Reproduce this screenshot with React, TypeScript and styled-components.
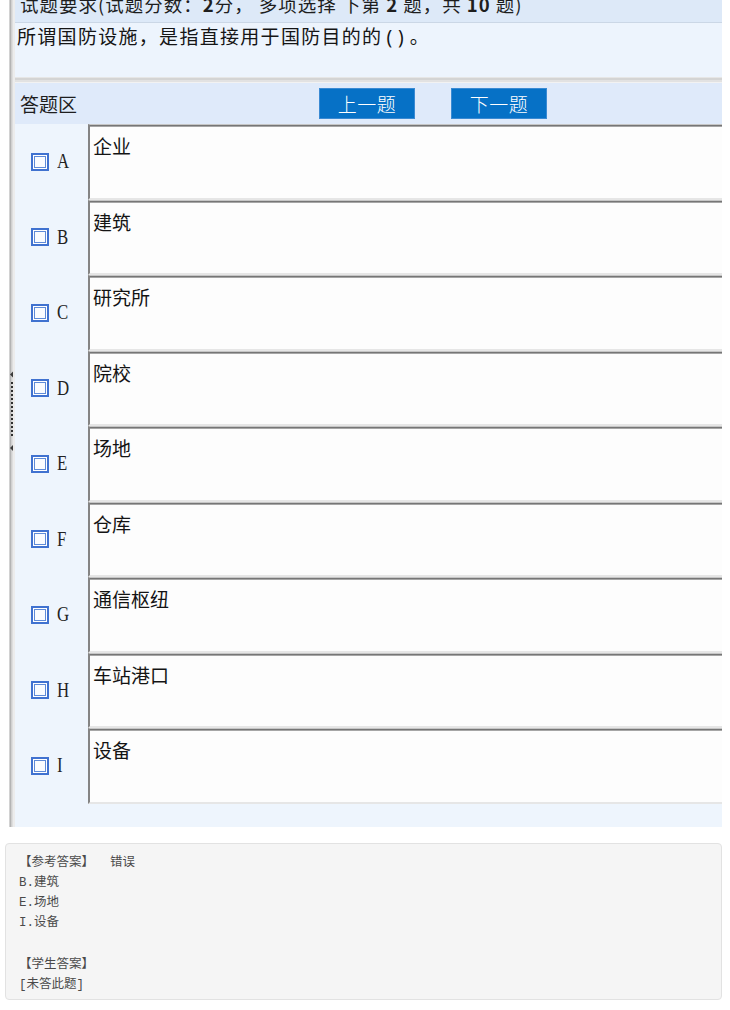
import React from "react";
import styled, { createGlobalStyle } from "styled-components";

const GlobalStyle = createGlobalStyle`
  html, body { margin: 0; padding: 0; background: #ffffff; }
  body { font-family: "Noto Sans CJK SC", "Noto Sans", sans-serif; }
`;

const Page = styled.div`
  width: 730px;
  display: flex;
  flex-direction: column;
`;

const Shot = styled.div`
  margin-left: 8px;
  width: 714px;
  height: 827px;
  display: flex;
  overflow: hidden;
`;

const Gutter = styled.div`
  width: 7px;
  flex: none;
  display: flex;
  flex-direction: column;
  align-items: flex-start;
  padding-top: 371px;
  box-sizing: border-box;
  background: linear-gradient(
    to right,
    #ffffff 0 1px,
    #d2d2d2 1px 2px,
    #b4b4b4 2px 3px,
    #d0d0d0 3px 4px,
    #dedede 4px 5px,
    #ececec 5px 7px
  );
`;

const Main = styled.div`
  flex: 1;
  min-width: 0;
  display: flex;
  flex-direction: column;
  background: #eef5fd;
`;

const TopStrip = styled.div`
  height: 22px;
  flex: none;
  overflow: hidden;
  background: #dde9f8;
  border-bottom: 1px solid #cbd7e6;
  padding-left: 5px;
  color: #1e1e1e;
  font-size: 18.5px;
  white-space: nowrap;
  b { font-weight: 700; }
`;

const TopText = styled.div`
  line-height: 22px;
  margin-top: -7px;
  letter-spacing: 1px;
`;

const Question = styled.div`
  height: 54px;
  flex: none;
  background: #edf4fd;
  padding: 1px 0 0 2px;
  box-sizing: border-box;
  font-size: 19px;
  line-height: 24px;
  letter-spacing: 1.3px;
  color: #151515;
  white-space: nowrap;
`;

const Blank = styled.span`
  font-family: "Noto Sans", sans-serif;
  letter-spacing: 6px;
  margin-left: 4px;
`;

const Separator = styled.div`
  height: 6px;
  flex: none;
  background: linear-gradient(
    to bottom,
    #e6e6e6 0 1px,
    #d4d4d4 1px 3px,
    #e2e2e2 3px 5px,
    #f2f2f2 5px 6px
  );
`;

const AnswerBar = styled.div`
  height: 41px;
  flex: none;
  display: flex;
  align-items: center;
  padding-left: 5px;
  background: #dfeafa;
`;

const BarLabel = styled.div`
  width: 299px;
  font-size: 19px;
  color: #1e1e1e;
`;

const NavButton = styled.div<{ $gap?: number }>`
  width: 96px;
  height: 31px;
  margin-left: ${(p) => p.$gap ?? 0}px;
  box-sizing: border-box;
  display: flex;
  align-items: center;
  justify-content: center;
  background: #0671c6;
  border: 1px solid #3a8ad3;
  color: #ffffff;
  font-size: 19px;
  font-weight: 300;
  letter-spacing: 0.5px;
`;

const OptionList = styled.div`
  display: flex;
  flex-direction: column;
`;

const OptionRow = styled.div`
  height: 75.5px;
  display: grid;
  grid-template-columns: 73px 1fr;
`;

const OptionHead = styled.div`
  display: flex;
  align-items: center;
  padding-left: 16px;
  gap: 8px;
`;

const Letter = styled.span`
  font-family: "Liberation Serif", "DejaVu Serif", serif;
  font-size: 21px;
  color: #222222;
  transform: scaleX(0.8);
  transform-origin: left center;
  display: inline-block;
`;

const TextBox = styled.div`
  box-sizing: border-box;
  background: #fdfdfd;
  border-top: 1px solid #c6c6c6;
  border-left: 2px solid #848484;
  border-bottom: 2px solid #e6e6e6;
  box-shadow: inset 0 1px 0 #767676, inset 0 2px 0 #a6a6a6;
  padding: 10px 3px 0 3px;
  font-size: 19px;
  line-height: 22px;
  color: #141414;
`;

const Filler = styled.div`
  flex: 1;
`;

const AnswerBox = styled.div`
  margin: 16px 0 0 5px;
  width: 717px;
  box-sizing: border-box;
  background: #f5f5f5;
  border: 1px solid #e2e2e2;
  border-radius: 4px;
  padding: 9px 13px 4px 13px;
  font-family: "Liberation Mono", "Noto Sans CJK SC", monospace;
  font-size: 12.5px;
  line-height: 20px;
  color: #4a4a4a;
`;

const AnswerLine = styled.div<{ $tall?: boolean }>`
  min-height: ${(p) => (p.$tall ? 22 : 20)}px;
  white-space: pre;
`;

const Verdict = styled.span`
  margin-left: 16px;
`;

const Checkbox = () => (
  <svg width="18" height="18" viewBox="0 0 18 18" style={{ flex: "none" }}>
    <rect x="1" y="1" width="16" height="16" fill="#ffffff" stroke="#4072d0" strokeWidth="2" />
    <rect x="3.5" y="3.5" width="11" height="11" fill="#fafcff" stroke="#5f8bd8" strokeWidth="1" />
  </svg>
);

const Handle = () => (
  <svg width="6" height="82" viewBox="0 0 6 82">
    <polygon points="2,3.5 5,0.5 5,6.5" fill="#3a3a3a" />
    {Array.from({ length: 14 }).map((_, i) => (
      <rect key={i} x="3" y={11 + i * 4} width="2" height="2" fill="#2e2e2e" />
    ))}
    <polygon points="2,77 5,74 5,80" fill="#3a3a3a" />
  </svg>
);

const options: [string, string][] = [
  ["A", "企业"],
  ["B", "建筑"],
  ["C", "研究所"],
  ["D", "院校"],
  ["E", "场地"],
  ["F", "仓库"],
  ["G", "通信枢纽"],
  ["H", "车站港口"],
  ["I", "设备"],
];

export default function App() {
  return (
    <Page>
      <GlobalStyle />
      <Shot>
        <Gutter>
          <Handle />
        </Gutter>
        <Main>
          <TopStrip>
            <TopText>
              试题要求(试题分数：<b>2</b>分，&nbsp;多项选择 下第 <b>2</b> 题，共 <b>10</b> 题)
            </TopText>
          </TopStrip>
          <Question>
            所谓国防设施，是指直接用于国防目的的<Blank>()</Blank>。
          </Question>
          <Separator />
          <AnswerBar>
            <BarLabel>答题区</BarLabel>
            <NavButton>上一题</NavButton>
            <NavButton $gap={36}>下一题</NavButton>
          </AnswerBar>
          <OptionList>
            {options.map(([letter, text]) => (
              <OptionRow key={letter}>
                <OptionHead>
                  <Checkbox />
                  <Letter>{letter}</Letter>
                </OptionHead>
                <TextBox>{text}</TextBox>
              </OptionRow>
            ))}
          </OptionList>
          <Filler />
        </Main>
      </Shot>
      <AnswerBox>
        <AnswerLine>
          【参考答案】<Verdict>错误</Verdict>
        </AnswerLine>
        <AnswerLine>B.建筑</AnswerLine>
        <AnswerLine>E.场地</AnswerLine>
        <AnswerLine>I.设备</AnswerLine>
        <AnswerLine $tall> </AnswerLine>
        <AnswerLine>【学生答案】</AnswerLine>
        <AnswerLine>[未答此题]</AnswerLine>
      </AnswerBox>
    </Page>
  );
}
